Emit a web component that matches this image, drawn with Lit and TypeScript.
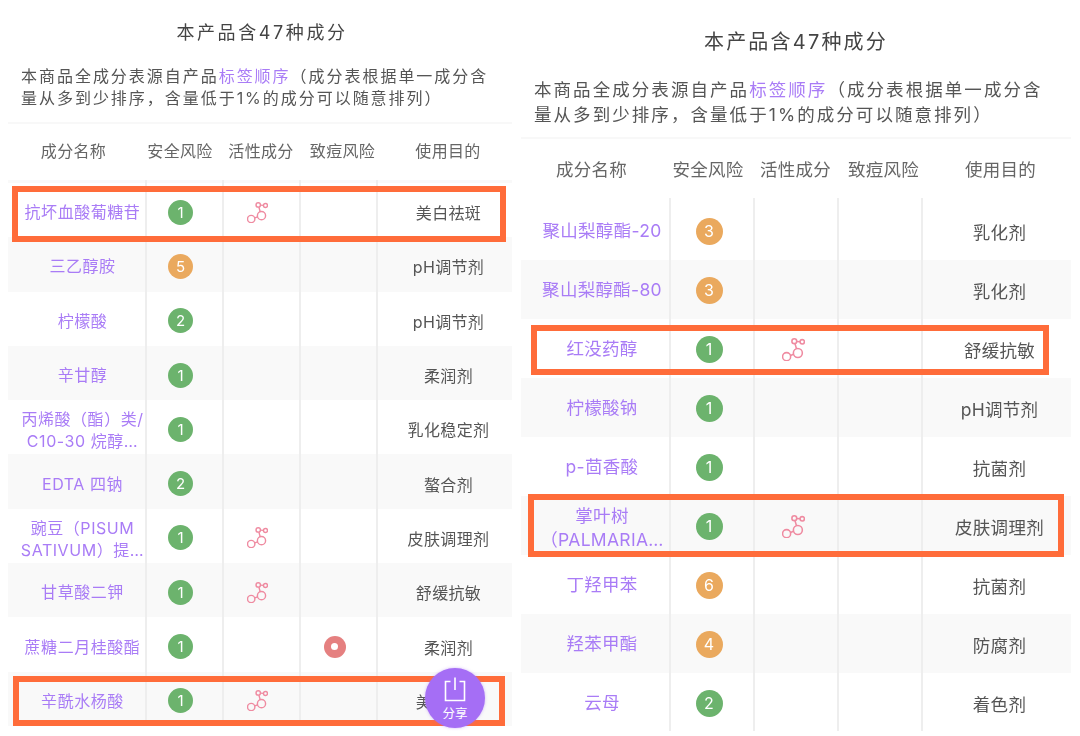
import { LitElement, html, css, svg, nothing } from "lit";
import { customElement, property } from "lit/decorators.js";

type Row = { name: string[]; risk: number; active?: boolean; cancer?: boolean; use: string };
type Box = { left: number; top: number; width: number; height: number };

const LEFT_ROWS: Row[] = [
  { name: ["抗坏血酸葡糖苷"], risk: 1, active: true, use: "美白祛斑" },
  { name: ["三乙醇胺"], risk: 5, use: "pH调节剂" },
  { name: ["柠檬酸"], risk: 2, use: "pH调节剂" },
  { name: ["辛甘醇"], risk: 1, use: "柔润剂" },
  { name: ["丙烯酸（酯）类/", "C10-30 烷醇…"], risk: 1, use: "乳化稳定剂" },
  { name: ["EDTA 四钠"], risk: 2, use: "螯合剂" },
  { name: ["豌豆（PISUM", "SATIVUM）提…"], risk: 1, active: true, use: "皮肤调理剂" },
  { name: ["甘草酸二钾"], risk: 1, active: true, use: "舒缓抗敏" },
  { name: ["蔗糖二月桂酸酯"], risk: 1, cancer: true, use: "柔润剂" },
  { name: ["辛酰水杨酸"], risk: 1, active: true, use: "美白祛斑" },
];

const RIGHT_ROWS: Row[] = [
  { name: ["聚山梨醇酯-20"], risk: 3, use: "乳化剂" },
  { name: ["聚山梨醇酯-80"], risk: 3, use: "乳化剂" },
  { name: ["红没药醇"], risk: 1, active: true, use: "舒缓抗敏" },
  { name: ["柠檬酸钠"], risk: 1, use: "pH调节剂" },
  { name: ["p-茴香酸"], risk: 1, use: "抗菌剂" },
  { name: ["掌叶树", "（PALMARIA…"], risk: 1, active: true, use: "皮肤调理剂" },
  { name: ["丁羟甲苯"], risk: 6, use: "抗菌剂" },
  { name: ["羟苯甲酯"], risk: 4, use: "防腐剂" },
  { name: ["云母"], risk: 2, use: "着色剂" },
];

const LEFT_BOXES: Box[] = [
  { left: 4, top: 186, width: 494, height: 56 },
  { left: 5, top: 676, width: 492, height: 50 },
];
const RIGHT_BOXES: Box[] = [
  { left: 10, top: 314, width: 518, height: 50 },
  { left: 7, top: 483, width: 536, height: 63 },
];

const activeIcon = svg`<g fill="none" stroke="#ef8ba1" stroke-width="1.35">
  <circle cx="4" cy="16.2" r="3.5"/><circle cx="13.8" cy="13" r="3.9"/>
  <circle cx="10.7" cy="2.8" r="2.1"/><circle cx="17.6" cy="3.3" r="1.9"/>
  <path d="M12.8 3L15.7 3.2M11.3 4.9L12.6 9.3M7.4 15.2L10 14.2"/></g>`;

@customElement("ingredient-panel")
class IngredientPanel extends LitElement {
  @property({ type: Array }) rows: Row[] = [];
  @property({ type: Array }) boxes: Box[] = [];

  static styles = css`
    :host {
      display: block;
      position: relative;
      flex: none;
      width: var(--w);
      height: var(--h);
      overflow: hidden;
      background: #fff;
      color: #555;
      font-family: "Inter", "Noto Sans CJK SC", "Noto Sans", sans-serif;
      font-size: var(--fs);
      text-spacing-trim: space-all;
    }
    .title {
      height: var(--title-h);
      display: flex;
      align-items: center;
      justify-content: center;
      padding-left: var(--title-pl);
      font-size: var(--title-fs);
      letter-spacing: var(--title-ls);
      color: #444;
      box-sizing: border-box;
    }
    .desc {
      height: var(--desc-h);
      box-sizing: border-box;
      padding: var(--desc-pt) 0 0 var(--desc-pl);
      font-size: var(--desc-fs);
      letter-spacing: var(--desc-ls);
      line-height: var(--desc-lh);
      border-bottom: 2px solid #f8f8f8;
      white-space: nowrap;
    }
    .desc em { font-style: normal; color: #a97cf6; }
    .row {
      display: grid;
      grid-template-columns: var(--cols);
      align-items: stretch;
      letter-spacing: var(--ls);
    }
    .head {
      height: var(--head-h);
      grid-template-columns: var(--head-cols);
      padding-bottom: var(--head-pb);
      box-sizing: border-box;
      color: #666;
      background: #fff;
    }
    .head > div { display: flex; align-items: center; justify-content: center; }
    .peek { height: var(--peek-h); background: var(--peek-bg); }
    .item { height: var(--row-h); }
    .item:nth-child(odd) { background: #f9f9f9; }
    .cell {
      display: flex;
      align-items: center;
      justify-content: center;
      text-align: center;
      padding-top: var(--cell-pt);
      padding-right: var(--mid-pr);
      box-sizing: border-box;
      min-width: 0;
    }
    .cell + .cell { border-left: 2px solid #eeeeee; }
    .name {
      color: #a97cf6;
      line-height: var(--name-lh);
      flex-direction: column;
      white-space: nowrap;
      padding-left: var(--name-pl);
      padding-right: 0;
      letter-spacing: var(--name-ls);
    }
    .name.two { padding-top: var(--two-pt); }
    .use { padding-left: var(--use-pl); padding-right: 0; }
    .badge {
      width: var(--badge);
      height: var(--badge);
      border-radius: 50%;
      display: flex;
      align-items: center;
      justify-content: center;
      color: #fff;
      font-size: var(--badge-fs);
      letter-spacing: 0;
    }
    .low { background: #6cb36d; }
    .mid { background: #eaa95e; }
    .icon { width: var(--icon); height: var(--icon); }
    .dot {
      width: 22px;
      height: 22px;
      border-radius: 50%;
      background: #e58080;
      display: flex;
      align-items: center;
      justify-content: center;
    }
    .dot::after { content: ""; width: 7px; height: 7px; border-radius: 50%; background: #fff; }
    .box {
      position: absolute;
      box-sizing: border-box;
      border: var(--box-b) solid #ff6c3a;
    }
  `;

  render() {
    return html`
      <div class="title">本产品含47种成分</div>
      <div class="desc">
        <div><span>本商品全成分表源自产品</span><em>标签顺序</em><span>（成分表根据单一成分含</span></div>
        <div>量从多到少排序，含量低于1%的成分可以随意排列）</div>
      </div>
      <div class="row head">
        <div>成分名称</div><div>安全风险</div><div>活性成分</div><div>致痘风险</div><div>使用目的</div>
      </div>
      <div class="list">
        <div class="row peek"><div class="cell"></div><div class="cell"></div><div class="cell"></div><div class="cell"></div><div class="cell"></div></div>
        ${this.rows.map((r) => html`
          <div class="row item">
            <div class="cell name ${r.name.length > 1 ? "two" : ""}">${r.name.map((l) => html`<span>${l}</span>`)}</div>
            <div class="cell"><span class="badge ${r.risk >= 3 ? "mid" : "low"}">${r.risk}</span></div>
            <div class="cell">${r.active ? html`<svg class="icon" viewBox="0 0 20 20">${activeIcon}</svg>` : nothing}</div>
            <div class="cell">${r.cancer ? html`<span class="dot"></span>` : nothing}</div>
            <div class="cell use">${r.use}</div>
          </div>`)}
      </div>
      ${this.boxes.map((b) => html`<div class="box" style="left:${b.left}px;top:${b.top}px;width:${b.width}px;height:${b.height}px"></div>`)}
    `;
  }
}

@customElement("app-root")
class AppRoot extends LitElement {
  static styles = css`
    :host {
      display: block;
      position: relative;
      width: 1080px;
      height: 736px;
      overflow: hidden;
      background: #fff;
    }
    .page { display: flex; align-items: flex-start; padding-left: 8px; gap: 9px; filter: blur(0.35px); }
    .left {
      --w: 504px; --h: 730px;
      --fs: 16px; --ls: 0.35px; --name-ls: 0.55px;
      --title-h: 62px; --title-pl: 4px; --title-fs: 18px; --title-ls: 2.6px;
      --desc-h: 62px; --desc-pt: 3px; --desc-pl: 13px; --desc-fs: 16px; --desc-ls: 1.97px; --desc-lh: 22px;
      --head-h: 56px; --head-pb: 4px; --peek-h: 3px; --peek-bg: #f9f9f9;
      --cols: 137px 77px 77px 77px 136px;
      --head-cols: 131px 82px 80px 83px 128px;
      --row-h: 54.3px; --cell-pt: 4px; --two-pt: 6px; --name-lh: 22px; --name-pl: 12px; --mid-pr: 8px; --use-pl: 7px;
      --badge: 25px; --badge-fs: 15px; --icon: 21px; --box-b: 6px;
    }
    .right {
      --w: 550px; --h: 720px;
      margin-top: 11px;
      --fs: 17.5px; --ls: 0.3px; --name-ls: 0.3px;
      --title-h: 58px; --title-pl: 0px; --title-fs: 20px; --title-ls: 2.2px;
      --desc-h: 70px; --desc-pt: 8px; --desc-pl: 13px; --desc-fs: 17.5px; --desc-ls: 2.06px; --desc-lh: 25px;
      --head-h: 59px; --head-pb: 0px; --peek-h: 3px; --peek-bg: #fff;
      --cols: 148px 84px 84px 84px 150px;
      --head-cols: 141px 92px 83px 93px 141px;
      --row-h: 59px; --cell-pt: 1px; --two-pt: 5px; --name-lh: 24px; --name-pl: 14px; --mid-pr: 6px; --use-pl: 5px;
      --badge: 27px; --badge-fs: 16px; --icon: 23px; --box-b: 6px;
    }
    .share {
      position: absolute;
      left: 425px;
      top: 668px;
      width: 60px;
      height: 60px;
      border-radius: 50%;
      background: #a56ef5;
      color: #fff;
      display: flex;
      flex-direction: column;
      align-items: center;
      font-family: "Noto Sans CJK SC", sans-serif;
      font-size: 12.5px;
      line-height: 15px;
      box-shadow: 0 0 3px rgba(165, 110, 245, 0.5);
    }
    .share svg { width: 22px; height: 26px; margin-top: 9px; margin-bottom: 2px; }
  `;

  render() {
    return html`
      <div class="page">
        <ingredient-panel class="left" .rows=${LEFT_ROWS} .boxes=${LEFT_BOXES}></ingredient-panel>
        <ingredient-panel class="right" .rows=${RIGHT_ROWS} .boxes=${RIGHT_BOXES}></ingredient-panel>
      </div>
      <div class="share">
        <svg viewBox="0 0 22 26" fill="none" stroke="#fff" stroke-width="1.6">
          <path d="M6.5 4.5H1.5V23.5H20.5V4.5H15.5M11 0.5V13"/>
        </svg>
        <span>分享</span>
      </div>
    `;
  }
}
